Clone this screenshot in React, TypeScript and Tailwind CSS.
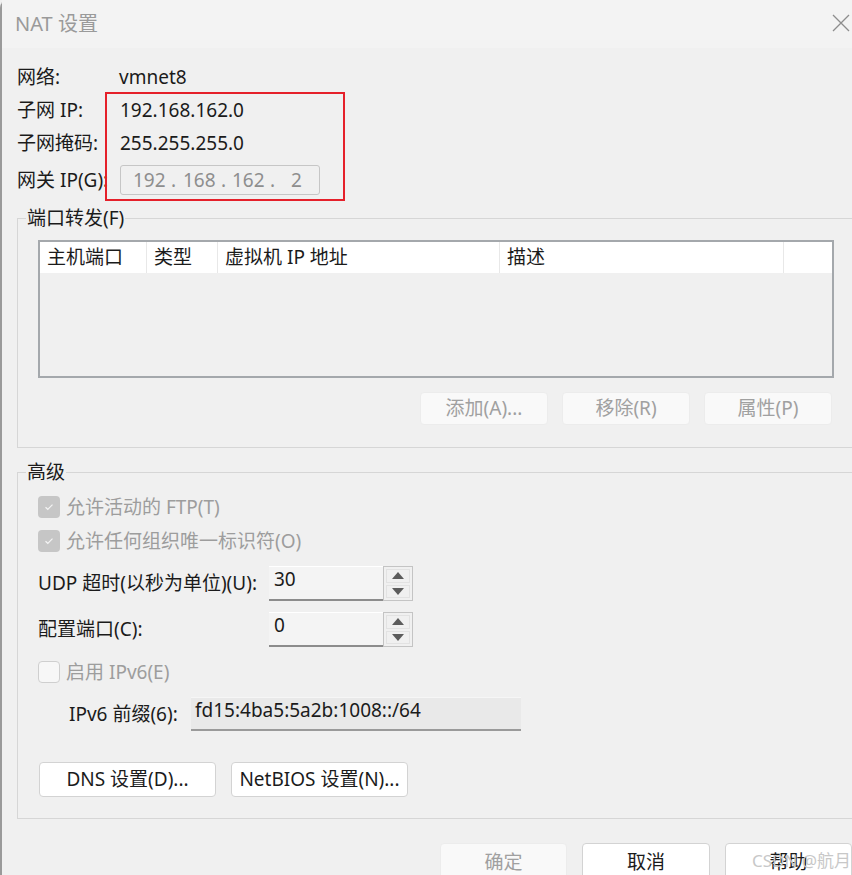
import React from "react";

const FONT = "font-['Noto_Sans','Noto_Sans_CJK_SC',sans-serif]";

function Btn({
  children,
  disabled = false,
  className = "",
}: {
  children: React.ReactNode;
  disabled?: boolean;
  className?: string;
}) {
  return (
    <div
      className={`flex items-center justify-center rounded-[4px] border text-[19px] ${
        disabled
          ? "bg-[#f9f9f9] border-[#ececec] text-[#a0a0a0]"
          : "bg-white border-[#d3d3d3] text-[#1b1b1b]"
      } ${className}`}
    >
      {children}
    </div>
  );
}

function Check({ checked, label }: { checked: boolean; label: string }) {
  return (
    <div className="flex h-[22px] items-center gap-[6px]">
      {checked ? (
        <div className="flex h-[22px] w-[22px] items-center justify-center rounded-[4px] bg-[#c6c6c6]">
          <svg width="10" height="8" viewBox="0 0 10 8">
            <path d="M1.5 4.2 L3.8 6.3 L8.5 1.6" fill="none" stroke="#f4f4f4" strokeWidth="1.2" />
          </svg>
        </div>
      ) : (
        <div className="h-[22px] w-[22px] rounded-[4px] border border-[#cfcfcf] bg-[#f7f7f7]" />
      )}
      <span className="text-[19px] text-[#9d9d9d]">{label}</span>
    </div>
  );
}

function Spin({ value }: { value: string }) {
  return (
    <div className="flex h-[35px]">
      <div className="w-[114px] border-t border-t-white border-b-2 border-b-[#8c8c8c] bg-[#f4f4f4] pl-[5px] text-[19px] leading-[24px] text-[#1b1b1b]">
        {value}
      </div>
      <div className="flex w-[30px] flex-col gap-[2px] border border-[#c4c4c4] bg-[#f0f0f0] p-[2px]">
        <div className="flex flex-1 items-center justify-center border border-[#e2e2e2]">
          <svg width="12" height="7" viewBox="0 0 12 7">
            <path d="M0 7 L6 0 L12 7 Z" fill="#5c5c5c" />
          </svg>
        </div>
        <div className="flex flex-1 items-center justify-center border border-[#e2e2e2]">
          <svg width="12" height="7" viewBox="0 0 12 7">
            <path d="M0 0 L12 0 L6 7 Z" fill="#5c5c5c" />
          </svg>
        </div>
      </div>
    </div>
  );
}

export default function App() {
  const cols = [
    { label: "主机端口", w: "w-[107px]" },
    { label: "类型", w: "w-[71px]" },
    { label: "虚拟机 IP 地址", w: "w-[282px]" },
    { label: "描述", w: "w-[284px]" },
  ];

  return (
    <div className={`relative h-[875px] w-[852px] overflow-hidden bg-[#f0f0f0] ${FONT}`}>
      <div className="flex h-full flex-col rounded-tl-[8px] border-l-2 border-[#9a9a9a]">
        {/* 标题栏 */}
        <div className="flex h-[48px] shrink-0 items-center justify-between bg-[#f3f3f3] pl-[13px] pr-[2px]">
          <span className="text-[20px] text-[#9a9a9a]">NAT 设置</span>
          <svg width="18" height="18" viewBox="0 0 18 18" className="mb-[2px]">
            <path d="M1 1 L17 17 M17 1 L1 17" stroke="#8d8d8d" strokeWidth="1.3" />
          </svg>
        </div>

        {/* 网络信息 */}
        <div className="flex flex-col gap-[3px] pl-[15px] pt-[14px] text-[19px] text-[#1b1b1b]">
          <div className="flex h-[30px] items-center">
            <span className="w-[102px]">网络:</span>
            <span>vmnet8</span>
          </div>
          <div className="flex h-[30px] items-center">
            <span className="w-[103px]">子网 IP:</span>
            <span>192.168.162.0</span>
          </div>
          <div className="flex h-[30px] items-center">
            <span className="w-[103px]">子网掩码:</span>
            <span>255.255.255.0</span>
          </div>
          <div className="mt-[4px] flex h-[30px] items-center">
            <span className="w-[103px]">网关 IP(G):</span>
            <div className="flex h-[30px] w-[200px] items-center rounded-[3px] border border-[#c6c6c6] pl-[12px] text-[#8e8e8e]">
              <span className="w-[38px]">192</span>
              <span className="w-[12px]">.</span>
              <span className="w-[38px]">168</span>
              <span className="w-[11px]">.</span>
              <span className="w-[38px]">162</span>
              <span className="w-[21px]">.</span>
              <span>2</span>
            </div>
          </div>
        </div>

        {/* 端口转发 */}
        <fieldset className="ml-[15px] mt-[10px] w-[850px] shrink-0 border border-[#d6d6d6]">
          <legend className="ml-[8px] px-[1px] text-[19px] leading-[26px] text-[#1b1b1b]">端口转发(F)</legend>
          <div className="pb-[22px] pl-[20px]">
            <div className="mt-[9px] flex h-[138px] w-[796px] flex-col border-2 border-[#a4a8ac] bg-[#f0f0f0]">
              <div className="flex h-[31px] bg-white text-[19px] text-[#1b1b1b]">
                {cols.map((c) => (
                  <div key={c.label} className={`${c.w} flex items-center border-r border-[#e8e8e8] pl-[7px]`}>
                    {c.label}
                  </div>
                ))}
                <div className="flex-1" />
              </div>
            </div>
            <div className="mt-[14px] flex w-[796px] justify-end gap-[14px] pr-[2px]">
              <Btn disabled className="h-[33px] w-[128px]">添加(A)...</Btn>
              <Btn disabled className="h-[33px] w-[128px]">移除(R)</Btn>
              <Btn disabled className="h-[33px] w-[128px]">属性(P)</Btn>
            </div>
          </div>
        </fieldset>

        {/* 高级 */}
        <fieldset className="ml-[15px] mt-[11px] w-[850px] shrink-0 border border-[#d6d6d6]">
          <legend className="ml-[8px] px-[1px] text-[19px] leading-[26px] text-[#1b1b1b]">高级</legend>
          <div className="mt-[11px] flex flex-col pb-[21px] pl-[20px]">
            <Check checked label="允许活动的 FTP(T)" />
            <div className="mt-[12px]">
              <Check checked label="允许任何组织唯一标识符(O)" />
            </div>
            <div className="mt-[14px] flex items-center text-[19px] text-[#1b1b1b]">
              <span className="w-[231px]">UDP 超时(以秒为单位)(U):</span>
              <Spin value="30" />
            </div>
            <div className="mt-[11px] flex items-center text-[19px] text-[#1b1b1b]">
              <span className="w-[231px]">配置端口(C):</span>
              <Spin value="0" />
            </div>
            <div className="mt-[14px]">
              <Check checked={false} label="启用 IPv6(E)" />
            </div>
            <div className="mt-[14px] flex items-center pl-[31px] text-[19px] text-[#1b1b1b]">
              <span className="w-[122px]">IPv6 前缀(6):</span>
              <div className="h-[34px] w-[330px] border-t border-t-[#f6f6f6] border-b-2 border-b-[#9a9a9a] bg-[#e9e9e9] pl-[4px] leading-[24px]">
                fd15:4ba5:5a2b:1008::/64
              </div>
            </div>
            <div className="mt-[31px] flex gap-[15px] pl-[1px]">
              <Btn className="h-[35px] w-[177px]">DNS 设置(D)...</Btn>
              <Btn className="h-[35px] w-[177px]">NetBIOS 设置(N)...</Btn>
            </div>
          </div>
        </fieldset>

        {/* 底部按钮 */}
        <div className="mt-[24px] flex justify-end gap-[15px]">
          <Btn disabled className="h-[38px] w-[127px] shrink-0">确定</Btn>
          <Btn className="h-[38px] w-[128px] shrink-0">取消</Btn>
          <Btn className="h-[38px] w-[127px] shrink-0">帮助</Btn>
        </div>
      </div>

      {/* 标注框 */}
      <div className="absolute left-[105px] top-[92px] h-[109px] w-[240px] border-2 border-[#e5202a]" />

      {/* 水印 */}
      <div className="absolute left-[752px] top-[848px] text-[17px] text-[#c8c8c8]">CSDN @航月</div>
    </div>
  );
}
